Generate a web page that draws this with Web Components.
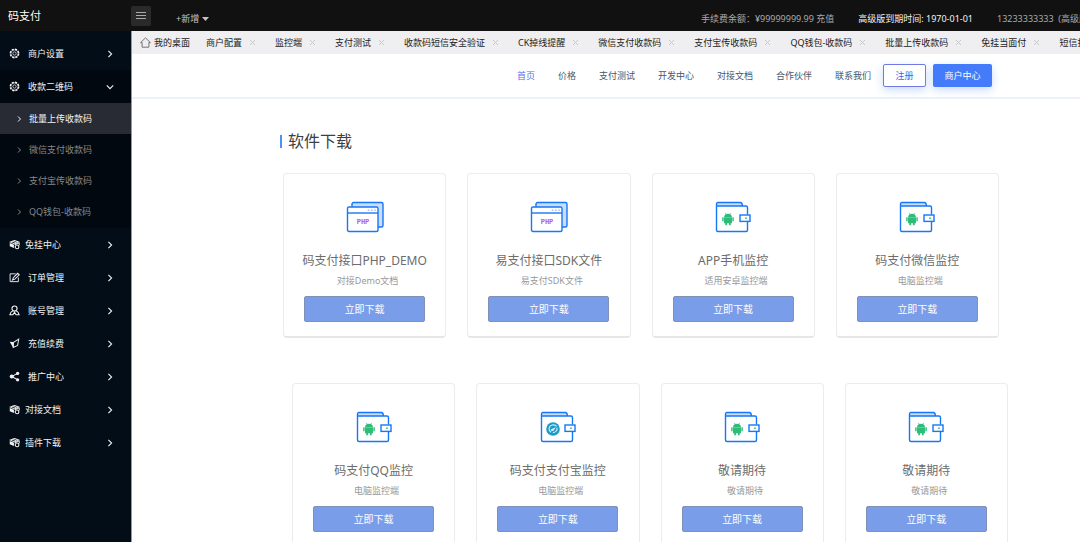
<!DOCTYPE html>
<html lang="zh-CN">
<head>
<meta charset="utf-8">
<title>码支付</title>
<style>
  html, body { margin: 0; height: 100%; }
  body { font-family: "Noto Sans", "Noto Sans CJK SC", sans-serif; font-size: 9px; line-height: 14px; background: #fff; color: #333; overflow: hidden; }
</style>
</head>
<body>
<pay-app>
  <top-bar slot="top">
    <span slot="brand">码支付</span>
    <span slot="add">+新增</span>
    <a slot="info" href="#balance">手续费余额：¥99999999.99 充值</a>
    <a slot="info" class="strong" href="#expiry">高级版到期时间: 1970-01-01</a>
    <a slot="info" class="account" href="#account">13233333333&nbsp; (高级版)</a>
  </top-bar>
  <side-menu slot="side">
    <menu-row icon="gear">商户设置</menu-row>
    <menu-row icon="gear" open>收款二维码</menu-row>
    <sub-menu>
      <sub-row active>批量上传收款码</sub-row>
      <sub-row>微信支付收款码</sub-row>
      <sub-row>支付宝传收款码</sub-row>
      <sub-row>QQ钱包-收款码</sub-row>
    </sub-menu>
    <menu-row icon="cube" tight>免挂中心</menu-row>
    <menu-row icon="edit">订单管理</menu-row>
    <menu-row icon="user">账号管理</menu-row>
    <menu-row icon="plane">充值续费</menu-row>
    <menu-row icon="share">推广中心</menu-row>
    <menu-row icon="cube" tight>对接文档</menu-row>
    <menu-row icon="cube" tight>插件下载</menu-row>
  </side-menu>
  <tab-strip>
    <page-tab home>我的桌面</page-tab>
    <page-tab>商户配置</page-tab>
    <page-tab>监控端</page-tab>
    <page-tab>支付测试</page-tab>
    <page-tab>收款码短信安全验证</page-tab>
    <page-tab>CK掉线提醒</page-tab>
    <page-tab>微信支付收款码</page-tab>
    <page-tab>支付宝传收款码</page-tab>
    <page-tab>QQ钱包-收款码</page-tab>
    <page-tab>批量上传收款码</page-tab>
    <page-tab>免挂当面付</page-tab>
    <page-tab>短信扣费</page-tab>
  </tab-strip>
  <site-nav></site-nav>
  <download-section>
    <span slot="heading">软件下载</span>
    <download-card slot="first" kind="php"><span slot="name">码支付接口PHP_DEMO</span><span slot="note">对接Demo文档</span></download-card>
    <download-card slot="first" kind="php"><span slot="name">易支付接口SDK文件</span><span slot="note">易支付SDK文件</span></download-card>
    <download-card slot="first" kind="android"><span slot="name">APP手机监控</span><span slot="note">适用安卓监控端</span></download-card>
    <download-card slot="first" kind="android"><span slot="name">码支付微信监控</span><span slot="note">电脑监控端</span></download-card>
    <download-card slot="second" kind="android"><span slot="name">码支付QQ监控</span><span slot="note">电脑监控端</span></download-card>
    <download-card slot="second" kind="desktop"><span slot="name">码支付支付宝监控</span><span slot="note">电脑监控端</span></download-card>
    <download-card slot="second" kind="android"><span slot="name">敬请期待</span><span slot="note">敬请期待</span></download-card>
    <download-card slot="second" kind="android"><span slot="name">敬请期待</span><span slot="note">敬请期待</span></download-card>
  </download-section>
</pay-app>

<script>
const define = (name, render) => customElements.define(name, class extends HTMLElement {
  constructor() {
    super();
    this.attachShadow({ mode: 'open' });
  }
  connectedCallback() {
    this.shadowRoot.innerHTML = render(this);
  }
});

const menuIcons = {
  gear: `<g fill="none" stroke="currentColor"><circle cx="6" cy="6" r="4.6" stroke-width="1.5" stroke-dasharray="2.4 1.2"/><circle cx="6" cy="6" r="3.9" stroke-width=".7"/><circle cx="6" cy="6" r="1.8" stroke-width=".8"/></g>`,
  cube: `<path d="M6 1.6 10.6 3.4 6 5.4 1.4 3.4Z" fill="none" stroke="currentColor" stroke-width="1.1"/><path d="M.8 4.4 5.4 6.4V9.8L.8 8Z" fill="currentColor"/><path d="M6.4 6.3 11.2 4.2V7" fill="none" stroke="currentColor"/><path d="m3.6 2.4 4.8 2" stroke="currentColor"/><circle cx="8.8" cy="8.6" r="2" fill="none" stroke="currentColor" stroke-width="1.2"/>`,
  edit: `<path d="M7.2 2H1.2v8.5h9V6" fill="none" stroke="currentColor"/><path d="m4.2 8.4.5-2.2L9.4 1.4 11.2 3 6.4 7.8Z" fill="none" stroke="currentColor" stroke-width="1.1"/><path d="m3 9 2-.8" stroke="currentColor"/>`,
  user: `<circle cx="6" cy="3.9" r="2.8" fill="none" stroke="currentColor" stroke-width="1.2"/><path d="M4.2 6.2C2.4 7 1.4 8.6 1 10.6H4.2L6 8l1.8 2.6H11c-.4-2-1.4-3.6-3.2-4.4" fill="none" stroke="currentColor" stroke-width="1.2"/>`,
  plane: `<path d="M10.6 1.2 5 4.6 4.6 10.4 9.4 8.2Z" fill="none" stroke="currentColor" stroke-width="1.1"/><path d="M.8 4.2 4.4 4.4 4.8 11Z" fill="currentColor"/>`,
  share: `<path d="M9.4 2.6 3 6l6.4 3.6" fill="none" stroke="currentColor" stroke-width="1.1"/><circle cx="3" cy="6" r="2.2" fill="currentColor"/><circle cx="9.4" cy="2.6" r="1.8" fill="currentColor"/><circle cx="9.4" cy="9.6" r="1.8" fill="currentColor"/>`
};

define('pay-app', () => `
  <style>
    :host { display: grid; height: 100vh; grid-template: 31px minmax(0, 1fr) / 131px minmax(0, 1fr); }
    header { grid-column: 1 / -1; display: grid; }
    aside { display: grid; background: #020d17; min-height: 0; overflow: hidden; }
    main { min-width: 0; overflow: hidden; border-left: 1px solid #8f9aa5; }
  </style>
  <header><slot name="top"></slot></header>
  <aside><slot name="side"></slot></aside>
  <main><slot></slot></main>`);

define('top-bar', () => `
  <style>
    :host { display: flex; align-items: center; background: #111; color: #eee; white-space: nowrap; overflow: hidden; }
    .brand { width: 123px; padding-left: 8px; font-size: 11px; line-height: 16px; color: #fff; }
    button { border: 0; font: inherit; color: #c4c4c4; display: flex; align-items: center; }
    .fold { width: 20px; height: 20px; padding: 0; justify-content: center; background: #2a2a2a; border-radius: 2px; }
    .add { margin: 6px 0 0 25px; padding: 0; gap: 3px; background: none; line-height: 14px; }
    nav { margin: 6px 0 0 auto; display: flex; gap: 24px; }
    ::slotted(a) { color: #aaa; text-decoration: none; }
    ::slotted(a.strong) { color: #f4f4f4; }
    ::slotted(a.account) { width: 83px; overflow: hidden; }
  </style>
  <div class="brand"><slot name="brand"></slot></div>
  <button class="fold" aria-label="折叠菜单"><svg width="12" height="10" viewBox="0 0 12 10" stroke="#aaa"><path d="M1 1.5h10M1 4.5h10M1 7.5h10"/></svg></button>
  <button class="add"><slot name="add"></slot><svg width="7" height="4" viewBox="0 0 7 4"><path d="M0 0h7L3.5 4Z" fill="#c4c4c4"/></svg></button>
  <nav><slot name="info"></slot></nav>`);

define('side-menu', () => `
  <style>:host { display: block; padding-top: 6px; color: #f2f2f2; }</style>
  <nav><slot></slot></nav>`);

define('menu-row', el => `
  <style>
    :host { display: block; height: 33px; }
    :host([open]) { background: #02080f; }
    a { height: 100%; display: flex; align-items: center; padding: 0 17px 0 9px; color: inherit; text-decoration: none; }
    span { flex: 1; margin-left: 8px; }
    :host([tight]) span { margin-left: 5px; }
  </style>
  <a href="#menu"><svg width="11" height="11" viewBox="0 0 12 12">${menuIcons[el.getAttribute('icon')]}</svg><span><slot></slot></span>
  <svg width="8" height="8" viewBox="0 0 8 8" fill="none" stroke="currentColor" stroke-width="1.1"><path d="${el.hasAttribute('open') ? 'M.8 2.4 4 5.6 7.2 2.4' : 'M2.4.8 5.6 4 2.4 7.2'}"/></svg></a>`);

define('sub-menu', () => `
  <style>:host { display: block; background: #02080f; padding-bottom: 1px; }</style><slot></slot>`);

define('sub-row', () => `
  <style>
    :host { display: block; height: 31px; color: #85898d; }
    :host([active]) { background: #282b33; color: #f4f4f4; }
    a { height: 100%; display: flex; align-items: center; gap: 7px; padding-left: 16px; color: inherit; text-decoration: none; }
  </style>
  <a href="#code"><svg width="6" height="6" viewBox="0 0 6 6" fill="none" stroke="currentColor"><path d="m2 .5 2.5 2.5L2 5.5"/></svg><slot></slot></a>`);

define('tab-strip', () => `
  <style>:host { display: flex; height: 23px; align-items: center; padding-left: 8px; background: #efeef0; color: #222; overflow: hidden; box-sizing: border-box; }</style>
  <slot></slot>`);

define('page-tab', el => `
  <style>
    :host { flex: none; display: flex; align-items: center; white-space: nowrap; }
    a { color: inherit; text-decoration: none; display: flex; align-items: center; gap: 3px; }
    :host([home]) { margin-right: 16px; }
    button { border: 0; background: none; padding: 0 19px 0 7px; display: flex; }
  </style>
  ${el.hasAttribute('home')
    ? `<a href="#home"><svg width="11" height="11" viewBox="0 0 11 11" fill="none" stroke="#666" stroke-width=".9"><path d="M.6 5.6 5.5.9l4.9 4.7H8.9v4.6H2.1V5.6Z"/></svg><slot></slot></a>`
    : `<a href="#tab"><slot></slot></a><button aria-label="关闭"><svg width="7" height="7" viewBox="0 0 7 7" stroke="#c8c8c8"><path d="m1 1 5 5M6 1 1 6"/></svg></button>`}`);

define('site-nav', () => `
  <style>
    :host { display: flex; justify-content: flex-end; align-items: center; height: 45px; padding-right: 88px; border-bottom: 2px solid #edf1fb; box-sizing: border-box; white-space: nowrap; }
    nav { display: flex; gap: 23px; margin-right: 12px; }
    a { color: #45566b; text-decoration: none; }
    a.on { color: #5b6be8; }
    button { font: inherit; height: 23px; padding: 0; border-radius: 2px; box-shadow: 0 3px 10px #c9dbfa; }
    .join { width: 43px; border: 1px solid #6f79e6; background: #fff; color: #4a63e8; margin-right: 7px; }
    .center { width: 59px; border: 0; background: #437bfb; color: #fff; }
  </style>
  <nav>
    <a class="on" href="#index">首页</a><a href="#price">价格</a><a href="#test">支付测试</a><a href="#dev">开发中心</a><a href="#docs">对接文档</a><a href="#partner">合作伙伴</a><a href="#contact">联系我们</a>
  </nav>
  <button class="join">注册</button><button class="center">商户中心</button>`);

define('download-section', () => `
  <style>
    :host { display: block; padding: 31px 72px 0 148px; }
    h2 { margin: 0 0 21px; display: flex; align-items: center; gap: 6px; font-weight: 400; font-size: 16px; line-height: 22px; color: #3c3f43; }
    h2::before { content: ""; width: 2px; height: 13px; background: #4d90f6; }
    .row { display: grid; grid-template-columns: repeat(4, minmax(0, 1fr)); column-gap: 21px; margin: 0 9px 45px 3px; }
    .row + .row { margin: 0 0 45px 12px; }
  </style>
  <h2><slot name="heading"></slot></h2>
  <div class="row"><slot name="first"></slot></div>
  <div class="row"><slot name="second"></slot></div>`);

const android = `<g fill="#2dbd78"><path d="M9 16.6a4 3.8 0 0 1 8 0Z"/><path d="M9 16.4h8v5.8H9ZM7.2 16.2h1.4v4H7.2ZM17.4 16.2h1.4v4h-1.4ZM10.3 22h1.8v2.2h-1.8ZM13.9 22h1.8v2.2h-1.8Z"/><path d="m10.4 12 1 1.6M15.6 12l-1 1.6" stroke="#2dbd78" stroke-width=".7"/></g>`;
const desktop = `<circle cx="13" cy="18" r="6.8" fill="#1b9acb"/><path d="M16.7 15.4a4.5 4.5 0 0 0-7.7 2 4.5 4.5 0 0 0 2 3.8M16.9 16.7c.7 2.6-1 4.6-4 4.9" fill="none" stroke="#d8f0f8" stroke-width="1.1"/><path d="m10.8 18.4 5-2.5-2 3.6-2.4.8Z" fill="#d8f0f8"/>`;
const wallet = badge => `<path d="M1.5 5V3q0-1.5 1.5-1.5h23q1.5 0 2 3.5Z" fill="#cbdcfa"/><path d="M1.5 5V3q0-1.5 1.5-1.5h22.5q1.6 0 2 3.5H31q1.5 0 1.5 1.5v7M1.5 5H28M1.5 5v24q0 1.5 1.5 1.5h28q1.5 0 1.5-1.5v-8" fill="none" stroke="#1677f8" stroke-width="1.4"/><rect x="25" y="14" width="10" height="6.4" fill="#fff" stroke="#1677f8" stroke-width="1.4"/><circle cx="31" cy="17.2" r=".9" fill="#2dbd78"/>${badge}`;
const php = `<rect x="6" y="1.5" width="31" height="24.5" rx="1.5" fill="#cbdcfa" stroke="#1677f8" stroke-width="1.4"/><rect x="1.5" y="6" width="30.5" height="24.5" rx="1.5" fill="#fff" stroke="#1677f8" stroke-width="1.4"/><path d="M1.5 12H32" stroke="#1677f8" stroke-width="1.4"/><g fill="#a9c6f7"><circle cx="22.5" cy="9.2" r=".9"/><circle cx="25.8" cy="9.2" r=".9"/><circle cx="29.1" cy="9.2" r=".9"/></g><text x="17" y="23" text-anchor="middle" font-family="Liberation Mono, monospace" font-size="7" font-weight="700" fill="#b35bea">PHP</text>`;
const pictures = { php, android: wallet(android), desktop: wallet(desktop) };

define('download-card', el => `
  <style>
    :host { display: flex; flex-direction: column; align-items: center; height: 165px; box-sizing: border-box; padding-top: 27px; border: 1px solid #ececec; border-bottom: 2px solid #e6e6e6; border-radius: 4px; background: #fff; white-space: nowrap; }
    h3 { margin: 18px 0 3px; font-weight: 400; font-size: 12px; line-height: 20px; color: #6c6c6c; }
    p { margin: 0 0 8px; padding-left: 6px; color: #999; line-height: 14px; }
    button { width: 75%; height: 26px; padding: 0; border: 1px solid #8290b8; border-radius: 2px; background: #799de9; color: #fff; font: inherit; font-size: 10px; line-height: 16px; }
  </style>
  <svg width="${el.getAttribute('kind') === 'php' ? 38 : 36}" height="32" viewBox="0 0 ${el.getAttribute('kind') === 'php' ? 38 : 36} 32">${pictures[el.getAttribute('kind')]}</svg>
  <h3><slot name="name"></slot></h3>
  <p><slot name="note"></slot></p>
  <button>立即下载</button>`);
</script>
</body>
</html>
